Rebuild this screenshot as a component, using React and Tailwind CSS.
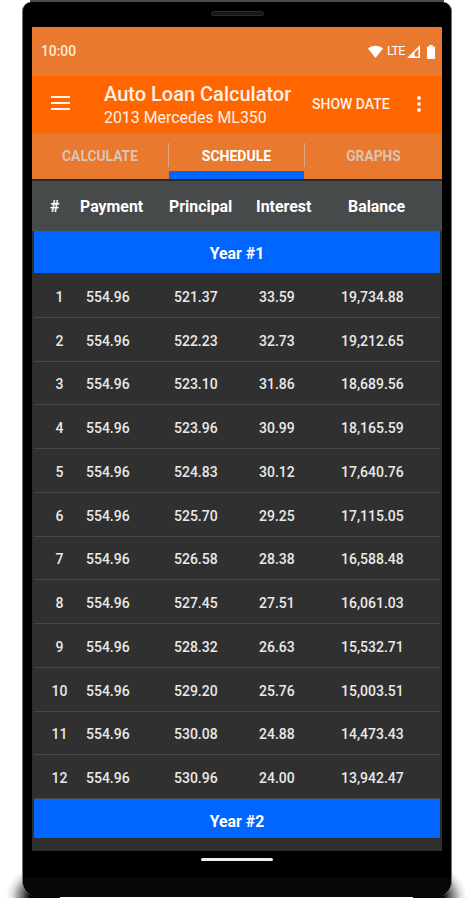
import React from 'react'

const rows = [
  [1, '554.96', '521.37', '33.59', '19,734.88'],
  [2, '554.96', '522.23', '32.73', '19,212.65'],
  [3, '554.96', '523.10', '31.86', '18,689.56'],
  [4, '554.96', '523.96', '30.99', '18,165.59'],
  [5, '554.96', '524.83', '30.12', '17,640.76'],
  [6, '554.96', '525.70', '29.25', '17,115.05'],
  [7, '554.96', '526.58', '28.38', '16,588.48'],
  [8, '554.96', '527.45', '27.51', '16,061.03'],
  [9, '554.96', '528.32', '26.63', '15,532.71'],
  [10, '554.96', '529.20', '25.76', '15,003.51'],
  [11, '554.96', '530.08', '24.88', '14,473.43'],
  [12, '554.96', '530.96', '24.00', '13,942.47'],
];

function StatusBar() {
  return (
    <div className="h-[49px] shrink-0 bg-[#e8792f] flex items-center justify-between pl-[9px] pr-[7px] text-white">
      <span className="text-[13.8px] font-medium text-[#ffe9dc]">10:00</span>
      <div className="flex items-center h-4">
        <svg className="w-[15px] h-[13px]" viewBox="0 0 15 13" fill="currentColor">
          <path d="M0 3.6C4.2-.2 10.8-.2 15 3.6L7.5 13z" />
        </svg>
        <span className="ml-[4px] w-[18px] text-[12.5px] tracking-[-0.6px] whitespace-nowrap">LTE</span>
        <svg className="ml-[2px] w-[13px] h-[13px]" viewBox="0 0 13 13">
          <path fill="currentColor" fillRule="evenodd" d="M0 13L13 0V13zM7.6 7.8V11.4H11.4V3.8z" />
        </svg>
        <svg className="ml-[7px] w-[8px] h-[14px]" viewBox="0 0 8 14" fill="currentColor">
          <path d="M2.3 0h3.4v1.5H7a1 1 0 0 1 1 1V13a1 1 0 0 1-1 1H1a1 1 0 0 1-1-1V2.5a1 1 0 0 1 1-1h1.3z" />
        </svg>
      </div>
    </div>
  );
}

function AppBar() {
  return (
    <div className="h-14 shrink-0 bg-[#ff6600] flex items-center text-[#fff1e8] whitespace-nowrap">
      <div className="ml-[19px] mb-[2px] w-[19px] flex flex-col gap-[4px]">
        <div className="h-[2px] bg-[#fff1e8]" />
        <div className="h-[2px] bg-[#fff1e8]" />
        <div className="h-[2px] bg-[#fff1e8]" />
      </div>
      <div className="ml-[34px] pt-[3px] w-[208px]">
        <p className="text-[20px] leading-[24px] font-medium">Auto Loan Calculator</p>
        <p className="text-[15.9px] leading-[23px]">2013 Mercedes ML350</p>
      </div>
      <span className="w-[78px] text-[14px] font-medium">SHOW DATE</span>
      <div className="ml-[27px] flex flex-col gap-[2px]">
        <div className="size-[4px] rounded-full bg-[#fff1e8]" />
        <div className="size-[4px] rounded-full bg-[#fff1e8]" />
        <div className="size-[4px] rounded-full bg-[#fff1e8]" />
      </div>
    </div>
  );
}

function Tabs() {
  return (
    <div className="h-[47px] shrink-0 bg-[#e8792f] flex text-[13.8px] font-bold text-[#d9c4b6] shadow-[inset_0_2px_2px_#ee7019]">
      <div className="w-[136px] h-full pt-px flex items-center justify-center">CALCULATE</div>
      <div className="w-px h-[24px] mt-[11px] bg-[#dfa682]" />
      <div className="w-[135px] h-full flex flex-col">
        <div className="h-[39px] pt-[9px] flex items-center justify-center text-white text-[14px]">SCHEDULE</div>
        <div className="h-[8px] bg-[#0066ff]" />
      </div>
      <div className="w-px h-[24px] mt-[11px] bg-[#dfa682]" />
      <div className="grow h-full pt-px flex items-center justify-center">GRAPHS</div>
    </div>
  );
}

function YearBar({ year, className }) {
  return (
    <div className={`mx-[2px] shrink-0 bg-[#0066ff] flex items-center justify-center text-[15.8px] font-bold text-white ${className}`}>
      <span>Year #{year}</span>
    </div>
  );
}

function Row({ data }) {
  const [num, payment, principal, interest, balance] = data;
  return (
    <div className="h-[43.75px] shrink-0 mx-[2px] pt-[4px] border-b border-[#484848] flex items-center text-[14px] font-medium text-[#e9e9e9]">
      <span className="w-[51px] text-center">{num}</span>
      <span className="ml-px w-[88px]">{payment}</span>
      <span className="w-[85px]">{principal}</span>
      <span className="w-[82px]">{interest}</span>
      <span>{balance}</span>
    </div>
  );
}

export default function App() {
  return (
    <div className="relative w-[473px] h-[900px] overflow-hidden bg-white pl-[22px] font-[Roboto,sans-serif]">
      {/* soft shadow under the bottom corners */}
      <div className="absolute left-0 top-[862px] w-[60px] h-[36px] bg-[radial-gradient(ellipse_44px_36px_at_50px_36px,#000_45%,#0008_65%,#0002_85%,transparent_100%)]" />
      <div className="absolute right-0 top-[862px] w-[60px] h-[36px] bg-[radial-gradient(ellipse_44px_36px_at_10px_36px,#000_45%,#0008_65%,#0002_85%,transparent_100%)]" />
      <div className="h-[2px] mx-2 w-[414px] bg-[#4a4a4a]" />
      <div className="relative w-[430px] h-[895px] flex flex-col bg-black border-x border-[#777] rounded-t-[9px] rounded-b-[16px]">
        <div className="h-[25px] shrink-0 flex justify-center pt-[9px]">
          <div className="w-[53px] h-[5px] rounded-full border border-[#2d2d2d] bg-[#161616]" />
        </div>
        <div className="ml-[9px] w-[410px] h-[824px] shrink-0 overflow-hidden flex flex-col bg-[#303030]">
          <StatusBar />
          <AppBar />
          <Tabs />
          <div className="h-[52px] shrink-0 bg-[#464a4b] pt-[2px] border-t-2 border-[#23302f] flex items-center text-[15.9px] font-bold text-white">
            <span className="ml-[18px] w-[30px]">#</span>
            <span className="w-[89px]">Payment</span>
            <span className="w-[87px]">Principal</span>
            <span className="w-[92px]">Interest</span>
            <span>Balance</span>
          </div>
          <YearBar year={1} className="h-[42px] pt-[3px]" />
          <div className="h-px shrink-0" />
          {rows.map((row) => <Row key={row[0]} data={row} />)}
          <YearBar year={2} className="h-[39px] pt-[7px]" />
        </div>
        <div className="mt-[7px] mx-auto w-[72px] h-[3px] shrink-0 rounded-sm bg-[#eee]" />
        <div className="mt-[16px] grow rounded-b-[16px] bg-[#070707]" />
      </div>
    </div>
  );
}
